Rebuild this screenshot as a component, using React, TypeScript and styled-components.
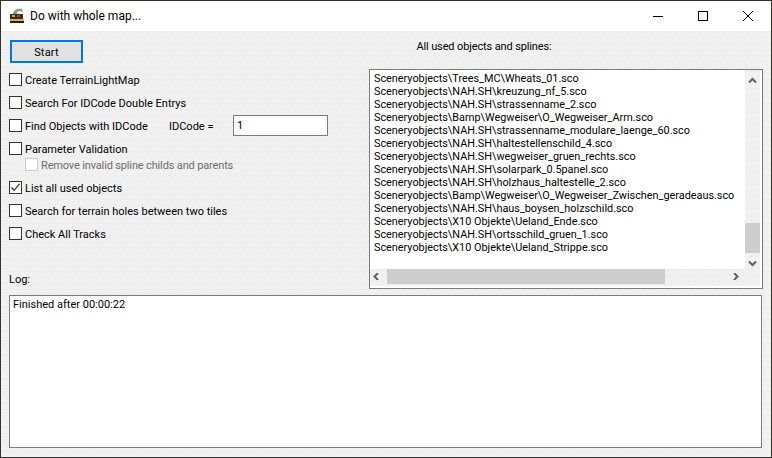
import React from "react";
import styled, { createGlobalStyle, css } from "styled-components";

const Global = createGlobalStyle`
  html, body { margin: 0; padding: 0; background: #2c2c24; }
  * { box-sizing: border-box; }
`;

const dots = css`
  background-color: #f0f0f0;
  background-image: radial-gradient(circle at 0.5px 0.5px, #e3e3e3 0.5px, transparent 0.51px);
  background-size: 6px 6px;
`;

const Window = styled.div`
  width: 772px;
  height: 458px;
  border: 1px solid #33352c;
  ${dots}
  display: flex;
  flex-direction: column;
  font-family: Roboto, "Noto Sans", sans-serif;
  font-size: 11px;
  color: #000;
  overflow: hidden;
`;

const TitleBar = styled.div`
  height: 30px;
  background: #fff;
  display: flex;
  align-items: center;
  flex: none;
  padding-right: 1px;
`;

const TitleIcon = styled.svg`
  width: 16px;
  height: 16px;
  margin-left: 8px;
  flex: none;
`;

const TitleText = styled.span`
  margin-left: 5px;
  font-size: 12px;
  flex: 1;
  line-height: 14px;
`;

const WinButton = styled.div`
  width: 45px;
  height: 30px;
  display: flex;
  align-items: center;
  justify-content: center;
`;

const Top = styled.div`
  display: flex;
  padding: 9px 8px 0 8px;
  height: 258px;
  flex: none;
`;

const Left = styled.div`
  width: 360px;
  flex: none;
  display: flex;
  flex-direction: column;
`;

const StartButton = styled.button`
  width: 73px;
  height: 23px;
  background: #e1e1e1;
  border: 2px solid #0078d7;
  font: inherit;
  letter-spacing: 0.2px;
  color: #000;
  padding: 1px 0 0;
  margin: 0 0 9px 1px;
`;

const OptionRow = styled.div<{ $gap?: number }>`
  display: flex;
  align-items: center;
  height: 15px;
  margin-bottom: ${(p) => p.$gap ?? 8}px;
`;

const Box = styled.span<{ $disabled?: boolean }>`
  width: 13px;
  height: 13px;
  flex: none;
  background: #fff;
  border: 1px solid ${(p) => (p.$disabled ? "#cccccc" : "#333333")};
  display: flex;
  align-items: center;
  justify-content: center;
`;

const Label = styled.span<{ $disabled?: boolean }>`
  margin: 2px 0 0 3px;
  color: ${(p) => (p.$disabled ? "#6d6d6d" : "#000")};
  letter-spacing: ${(p) => (p.$disabled ? "-0.15px" : "0")};
  white-space: nowrap;
`;

const FindLabel = styled(Label)`
  flex: 0 0 144px;
`;

const SubRow = styled(OptionRow)`
  padding-left: 16px;
`;

const IdLabel = styled.span`
  flex: 0 0 64px;
  margin-top: 2px;
  white-space: nowrap;
`;

const IdInput = styled.div`
  width: 95px;
  height: 21px;
  background: #fff;
  border: 1px solid #7a7a7a;
  padding: 2px 3px;
  line-height: 15px;
`;

const Right = styled.div`
  flex: 1;
  display: flex;
  flex-direction: column;
`;

const ListTitle = styled.div`
  text-align: center;
  height: 29px;
  margin-right: 164px;
  line-height: 13px;
  letter-spacing: -0.13px;
`;

const ListBox = styled.div`
  width: 394px;
  height: 221px;
  background: #fff;
  border: 1px solid #7a7a7a;
  position: relative;
  padding: 2px 0 0 4px;
  font-size: 10.85px;
`;

const ListLine = styled.div`
  height: 13px;
  line-height: 13px;
  white-space: nowrap;
`;

const VTrack = styled.div`
  position: absolute;
  top: 0;
  right: 2px;
  width: 15px;
  bottom: 17px;
  ${dots}
`;

const VThumb = styled.div`
  position: absolute;
  left: 0;
  top: 153px;
  width: 15px;
  height: 30px;
  background: #cdcdcd;
`;

const HTrack = styled.div`
  position: absolute;
  left: 0;
  right: 2px;
  bottom: 2px;
  height: 17px;
  ${dots}
`;

const HThumb = styled.div`
  position: absolute;
  left: 17px;
  top: 0;
  width: 278px;
  height: 15px;
  background: #cdcdcd;
`;

const Arrow = styled.svg<{ $x?: number; $y?: number }>`
  position: absolute;
  left: ${(p) => p.$x ?? 0}px;
  top: ${(p) => p.$y ?? 0}px;
  width: 9px;
  height: 7px;
`;

const LogLabel = styled.div`
  padding-left: 8px;
  height: 15px;
  line-height: 13px;
  margin-top: -16px;
  flex: none;
`;

const LogBox = styled.div`
  margin: 7px 0 0 8px;
  height: 153px;
  width: 753px;
  background: #fff;
  border: 1px solid #7a7a7a;
  padding: 2px 3px;
  line-height: 13px;
  flex: none;
`;

const files = [
  "Sceneryobjects\\Trees_MC\\Wheats_01.sco",
  "Sceneryobjects\\NAH.SH\\kreuzung_nf_5.sco",
  "Sceneryobjects\\NAH.SH\\strassenname_2.sco",
  "Sceneryobjects\\Bamp\\Wegweiser\\O_Wegweiser_Arm.sco",
  "Sceneryobjects\\NAH.SH\\strassenname_modulare_laenge_60.sco",
  "Sceneryobjects\\NAH.SH\\haltestellenschild_4.sco",
  "Sceneryobjects\\NAH.SH\\wegweiser_gruen_rechts.sco",
  "Sceneryobjects\\NAH.SH\\solarpark_0.5panel.sco",
  "Sceneryobjects\\NAH.SH\\holzhaus_haltestelle_2.sco",
  "Sceneryobjects\\Bamp\\Wegweiser\\O_Wegweiser_Zwischen_geradeaus.sco",
  "Sceneryobjects\\NAH.SH\\haus_boysen_holzschild.sco",
  "Sceneryobjects\\X10 Objekte\\Ueland_Ende.sco",
  "Sceneryobjects\\NAH.SH\\ortsschild_gruen_1.sco",
  "Sceneryobjects\\X10 Objekte\\Ueland_Strippe.sco",
];

const Check = () => (
  <svg width="11" height="11" viewBox="0 0 11 11">
    <path d="M1.5 5.5 L4.2 8.3 L9.5 1.8" fill="none" stroke="#333" strokeWidth="1.3" />
  </svg>
);

export default function App() {
  return (
    <>
      <Global />
      <Window>
        <TitleBar>
          <TitleIcon viewBox="0 0 16 16">
            <path d="M4 6 C4 2 8 0 13 1 L14 4 L10 3 C8 3 8 5 8 6 Z" fill="#8a9a8c" />
            <rect x="1" y="6" width="13" height="5" fill="#3c2a1c" />
            <rect x="3" y="7" width="3" height="2" fill="#c9a35a" />
            <rect x="8" y="7" width="3" height="2" fill="#b04030" />
            <rect x="1" y="11" width="14" height="2" fill="#d8b060" />
            <rect x="1" y="13" width="14" height="2" fill="#222" />
          </TitleIcon>
          <TitleText>Do with whole map...</TitleText>
          <WinButton>
            <svg width="10" height="10" viewBox="0 0 10 10"><path d="M0 5.5H10" stroke="#000" /></svg>
          </WinButton>
          <WinButton>
            <svg width="10" height="10" viewBox="0 0 10 10"><rect x="0.5" y="0.5" width="9" height="9" fill="none" stroke="#000" /></svg>
          </WinButton>
          <WinButton>
            <svg width="10" height="10" viewBox="0 0 10 10"><path d="M0 0L10 10M10 0L0 10" stroke="#000" /></svg>
          </WinButton>
        </TitleBar>
        <Top>
          <Left>
            <StartButton>Start</StartButton>
            <OptionRow><Box /><Label>Create TerrainLightMap</Label></OptionRow>
            <OptionRow><Box /><Label>Search For IDCode Double Entrys</Label></OptionRow>
            <OptionRow>
              <Box /><FindLabel>Find Objects with IDCode</FindLabel>
              <IdLabel>IDCode =</IdLabel>
              <IdInput>1</IdInput>
            </OptionRow>
            <OptionRow $gap={1}><Box /><Label>Parameter Validation</Label></OptionRow>
            <SubRow><Box $disabled /><Label $disabled>Remove invalid spline childs and parents</Label></SubRow>
            <OptionRow><Box><Check /></Box><Label>List all used objects</Label></OptionRow>
            <OptionRow><Box /><Label>Search for terrain holes between two tiles</Label></OptionRow>
            <OptionRow><Box /><Label>Check All Tracks</Label></OptionRow>
          </Left>
          <Right>
            <ListTitle>All used objects and splines:</ListTitle>
            <ListBox>
              {files.map((f) => <ListLine key={f}>{f}</ListLine>)}
              <VTrack>
                <Arrow $x={3} $y={7} viewBox="0 0 9 7"><path d="M1 5.5L4.5 2L8 5.5" fill="none" stroke="#606060" strokeWidth="2" /></Arrow>
                <VThumb />
                <Arrow $x={3} $y={190} viewBox="0 0 9 7"><path d="M1 1.5L4.5 5L8 1.5" fill="none" stroke="#606060" strokeWidth="2" /></Arrow>
              </VTrack>
              <HTrack>
                <HThumb />
                <Arrow $x={2} $y={4} viewBox="0 0 9 7"><path d="M6 0L2.5 3.5L6 7" fill="none" stroke="#606060" strokeWidth="2" /></Arrow>
                <Arrow $x={361} $y={4} viewBox="0 0 9 7"><path d="M3 0L6.5 3.5L3 7" fill="none" stroke="#606060" strokeWidth="2" /></Arrow>
              </HTrack>
            </ListBox>
          </Right>
        </Top>
        <LogLabel>Log:</LogLabel>
        <LogBox>Finished after 00:00:22</LogBox>
      </Window>
    </>
  );
}
